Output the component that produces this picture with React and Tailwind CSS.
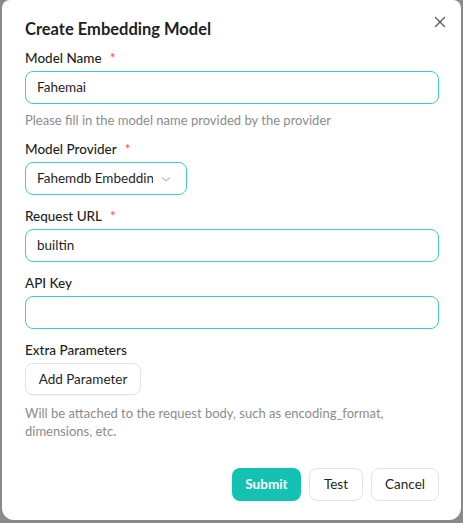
import React from 'react';

const Label = ({ children, required }) => (
    <label className="flex items-center text-[13.5px] font-medium text-[#1f1f1f] mb-[4px] h-[18px] leading-[18px]">
        {children}
        {required && <span className="ml-[8px] text-[#ff4d4f]">*</span>}
    </label>
);

const Input = ({ value }) => (
    <div className="h-[33px] border-[1.5px] border-[#3ccfc2] rounded-lg flex items-center px-[11px] text-[13.5px] text-[#1f1f1f] bg-white">
        {value}
    </div>
);

const App = () => {
    return (
        <div className="w-[463px] h-[523px] bg-[#8a8a8a] pl-[2px] pr-[2px] pb-[3px]" style={{ fontFamily: 'Lato, "Noto Sans", sans-serif' }}>
            <div className="relative w-full h-full bg-white rounded-b-xl rounded-t-lg pl-[23px] pr-[22px] pt-[17px]">
                <button className="absolute right-[13px] top-[14px] text-[#555] w-4 h-4 flex items-center justify-center">
                    <svg width="12" height="12" viewBox="0 0 12 12" fill="none" stroke="currentColor" strokeWidth="1.3" strokeLinecap="round">
                        <path d="M1.5 1.5l9 9M10.5 1.5l-9 9" />
                    </svg>
                </button>
                <h2 className="text-[16.5px] font-bold text-[#1f1f1f] leading-6 mb-[8px]">Create Embedding Model</h2>

                <Label required>Model Name</Label>
                <Input value="Fahemai" />
                <p className="text-[13px] text-[#8c8c8c] mt-[7px] leading-[18px]">Please fill in the model name provided by the provider</p>

                <div className="mt-[11px]">
                    <Label required>Model Provider</Label>
                    <div className="w-[162px] h-[33px] border-[1.5px] border-[#3ccfc2] rounded-lg flex items-center pl-[11px] pr-[14px] text-[13.5px] text-[#1f1f1f]">
                        <span className="flex-1 overflow-hidden whitespace-nowrap">Fahemdb Embedding</span>
                        <svg width="12" height="12" viewBox="0 0 12 12" fill="none" stroke="#bfbfbf" strokeWidth="1.2" className="ml-[7px] shrink-0">
                            <path d="M2 4.5l4 3.5 4-3.5" />
                        </svg>
                    </div>
                </div>

                <div className="mt-[12px]">
                    <Label required>Request URL</Label>
                    <Input value="builtin" />
                </div>

                <div className="mt-[12px]">
                    <Label>API Key</Label>
                    <Input value="" />
                </div>

                <div className="mt-[12px]">
                    <Label>Extra Parameters</Label>
                    <button className="h-[32px] w-[116px] border border-[#e3e3e3] rounded-lg text-[13.5px] text-[#1f1f1f] bg-white shadow-[0_1px_1px_rgba(0,0,0,0.03)]">
                        Add Parameter
                    </button>
                    <p className="text-[13px] text-[#8c8c8c] mt-[9px] leading-[18px]">
                        Will be attached to the request body, such as encoding_format, dimensions, etc.
                    </p>
                </div>

                <div className="flex justify-end gap-2 mt-[28px]">
                    <button className="h-[33px] w-[69px] rounded-lg bg-[#13c2b3] text-white text-[13.5px] font-bold">Submit</button>
                    <button className="h-[33px] w-[54px] rounded-lg border border-[#e3e3e3] text-[13.5px] text-[#1f1f1f] bg-white">Test</button>
                    <button className="h-[33px] w-[68px] rounded-lg border border-[#e3e3e3] text-[13.5px] text-[#1f1f1f] bg-white">Cancel</button>
                </div>
            </div>
        </div>
    );
};

export default App;
